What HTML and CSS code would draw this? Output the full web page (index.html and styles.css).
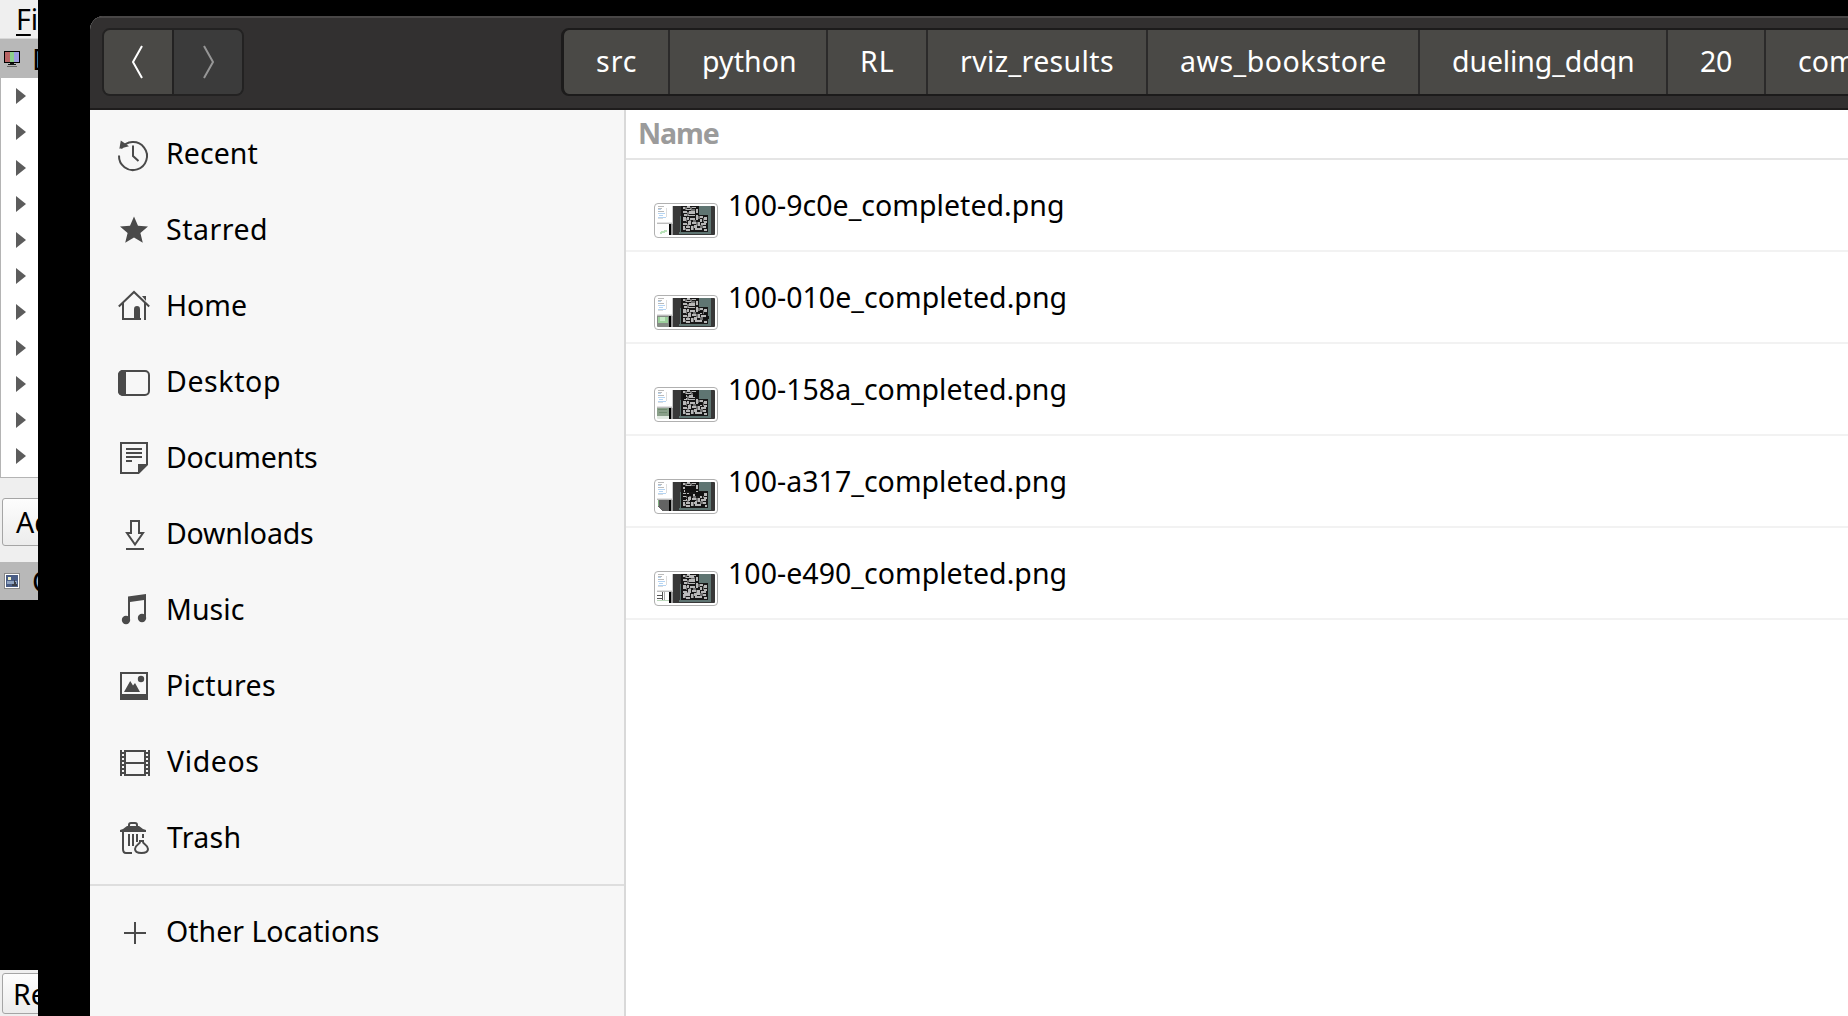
FILE: index.html
```html
<!DOCTYPE html>
<html lang="en">
<head>
<meta charset="utf-8">
<title>Files</title>
<link rel="stylesheet" href="styles.css">
</head>
<body>
<div class="desktop">
  <aside class="rviz">
    <div class="rviz-menu"><u>F</u>ile</div>
    <div class="rviz-title">
      <svg class="mini" viewBox="0 0 16 16" shape-rendering="crispEdges"><path fill="#000" d="M0 0h16v12H0z"/><path fill="#b86464" d="M1 1h5v10H1z"/><path fill="#8ccf8c" d="M6 1h4v10H6z"/><path fill="#9c9ce0" d="M10 1h5v10h-5z"/><path fill="#111" d="M6 12h4v1H6zM4 13h8v1H4z"/><path fill="#666" d="M3 15h10v1H3z"/></svg>
      <span>Displays</span>
    </div>
    <div class="rviz-tree">
      <i></i><i></i><i></i><i></i><i></i><i></i><i></i><i></i><i></i><i></i><i></i>
    </div>
    <div class="rviz-actions"><div class="rviz-button">Add</div></div>
    <div class="rviz-title camera">
      <svg class="mini" viewBox="0 0 16 16" shape-rendering="crispEdges"><path fill="#888" d="M0 0h16v16H0z"/><path fill="#fff" d="M1 1h14v14H1z"/><path fill="#4a5d85" d="M2 2h12v12H2z"/><path fill="#8fa3c0" d="M3 8h10v3H3z"/><path fill="#eef0c8" d="M4 4h3v3H4z"/><path fill="#3b3f48" d="M10 7h1v2h1v2h1v2H8v-2h2z"/></svg>
      <span>Camera</span>
    </div>
    <div class="rviz-view"></div>
    <div class="rviz-footer"><div class="rviz-button">Reset</div></div>
  </aside>

  <main class="window">
    <header class="header">
      <nav class="history">
        <button class="back"><svg width="12" height="34" viewBox="0 0 12 34"><path d="M11 1 2 17l9 16"/></svg></button>
        <button class="forward"><svg width="12" height="34" viewBox="0 0 12 34"><path d="M1 1l9 16L1 33"/></svg></button>
      </nav>
      <nav class="path">
        <a class="c-src">src</a><a class="c-python">python</a><a class="c-rl">RL</a><a class="c-rviz">rviz_results</a><a class="c-aws">aws_bookstore</a><a class="c-ddqn">dueling_ddqn</a><a class="c-20">20</a><a class="c-last">completed</a>
      </nav>
    </header>
    <div class="body">
      <aside class="places">
        <a><svg viewBox="0 0 32 32"><path class="s" d="M3.2 10.5A14 14 0 1 1 1 17.5M15 7.5V18l5.5 5"/><path d="M2.8 2.5 11 8.2l-9.6 2.6z"/></svg><span class="l-1">Recent</span></a>
        <a><svg viewBox="0 0 32 32"><path d="m16 2.5 4 9.2 10 .8-7.6 6.6 2.4 9.7-8.8-5.2-8.8 5.2 2.4-9.7L2 12.500l10-.8z"/></svg><span class="l-5">Starred</span></a>
        <a><svg viewBox="0 0 32 32"><path class="s" d="M.8 16.500 16 2l15.200 14.500M5 13v16h18M27 13v17"/><path d="M16 30V19.500c0-3 1-3.500 3-3.500s3 .5 3 3.500V30zM24 6h4v5z"/></svg><span>Home</span></a>
        <a><svg viewBox="0 0 32 32"><rect class="s" x="1" y="5" width="30" height="24" rx="4"/><path d="M5 4h3v26H5a5 5 0 0 1-5-5V9a5 5 0 0 1 5-5z"/></svg><span class="l-6">Desktop</span></a>
        <a><svg viewBox="0 0 32 32"><path class="s" d="M3 1h26v21.500L20.500 31H3zM8 7h16M8 11h16M8 15h16M8 19h6"/><path d="M20 22h10l-10 10z"/></svg><span class="l-m25">Documents</span></a>
        <a><svg viewBox="0 0 32 32"><path class="s" d="M13 3h8v12h4l-8 11.500L9 15h4zM8 31h18"/></svg><span class="l-m2">Downloads</span></a>
        <a><svg viewBox="0 0 32 32"><path d="M10 2.500 28 0v24h-2V6L12 8v18h-2z"/><circle cx="8" cy="26" r="4.200"/><circle cx="24" cy="24" r="4.200"/></svg><span class="l-1">Music</span></a>
        <a><svg viewBox="0 0 32 32"><path fill-rule="evenodd" d="M2 2h28v28H2zM4 4v20h24V4z"/><path d="M6 22 12.200 11l2.800 4.500 2-2.500 5 9z"/><circle cx="23" cy="9" r="3.200"/></svg><span class="l-4">Pictures</span></a>
        <a><svg viewBox="0 0 32 32"><path d="M2 4h2v26H2zM6 4h2v26H6zM26 4h2v26h-2zM30 4h2v26h-2zM6 4h22v2H6zM6 28h22v2H6zM6 16h22v2H6z"/><path class="s" d="M5 6v24M29 6v24" stroke-dasharray="2"/></svg><span class="l-6 tight">Videos</span></a>
        <a><svg viewBox="0 0 32 32"><path class="s" d="M11 5V3q0-2 2-2h4q2 0 2 2v2M5 9v18q0 4 3 4h6M11 12v12M15 12v12M19 12v8M25 12v4"/><path d="M2 10V8l3-1 4-3h12l4 3 3 1v2z"/><path class="s" d="M21 19h5M22 20c0 2-5 3-5 7 0 3 2 4 6.500 4s6.500-1 6.500-4c0-4-5-5-5-7"/></svg><span class="l-3 tight">Trash</span></a>
        <hr>
        <a><svg viewBox="0 0 32 32"><path class="s" d="M6 17h22M17 6v22"/></svg><span>Other Locations</span></a>
      </aside>

      <section class="files">
        <div class="columns">Name</div>
        <div class="file"><svg class="thumb" viewBox="0 0 58 29" shape-rendering="crispEdges"><use href="#base"/><path fill="#fdfdfd" d="M0 18h12v11H0z"/><path fill="#b9e2b9" d="M4 25h3v-1h3v2H8v1H5v1H3v-2h1z"/><use href="#map"/></svg><span>100-9c0e_completed.png</span></div>
        <div class="file"><svg class="thumb" viewBox="0 0 58 29" shape-rendering="crispEdges"><use href="#base"/><path fill="#858b85" d="M0 18h12v11H0z"/><path fill="#9bcf9b" d="M1 19h10v6H1z"/><path fill="#c5e8c5" d="M3 19h5v4H3z"/><use href="#map"/><path fill="#111" d="M47 15h3v2h-3zM46 20h4v2h-4zM49 18h3v3h-3zM42 13h4v2h-4z"/></svg><span>100-010e_completed.png</span></div>
        <div class="file"><svg class="thumb" viewBox="0 0 58 29" shape-rendering="crispEdges"><use href="#base"/><path fill="#8aa08a" d="M0 18h12v8H0z"/><path fill="#6f8a6f" d="M1 19h9v1H1zM2 22h8v1H2z"/><path fill="#e0e8e0" d="M0 26h12v3H0z"/><use href="#map"/><path fill="#111" d="M36 2h5v5h-5zM26 4h3v5h-3zM42 12h3v3h-3z"/></svg><span>100-158a_completed.png</span></div>
        <div class="file"><svg class="thumb" viewBox="0 0 58 29" shape-rendering="crispEdges"><use href="#base"/><path fill="#fff" d="M0 18h12v11H0z"/><path fill="#636363" d="M1 18h11v11H6l-3-2-2-3z"/><path fill="#7fae7f" d="M1 18h1v6H1z"/><use href="#map"/><path fill="#111" d="M28 4h11v6H28zM26 12h10v2H26zM38 10h9v4h-9zM33 18h5v2h-5zM44 22h4v3h-4zM26 15h3v3h-3z"/></svg><span>100-a317_completed.png</span></div>
        <div class="file"><svg class="thumb" viewBox="0 0 58 29" shape-rendering="crispEdges"><use href="#base"/><path fill="#fff" d="M0 18h12v11H0z"/><path fill="#555" d="M0 21h5v1H0zM5 18h1v8H5zM0 24h5v1H0z"/><path fill="#aaa" d="M7 18h1v8H7z"/><path fill="#b9d5b9" d="M0 26h12v1H0z"/><use href="#map"/><path fill="#bdbdbd" d="M32 1h5v3h-5zM27 19h6v3h-6zM40 16h3v5h-3z"/></svg><span>100-e490_completed.png</span></div>
      </section>
    </div>
  </main>
</div>

<svg class="defs" width="0" height="0">
  <defs>
    <g id="base">
      <path fill="#fff" d="M0 0h15v16H0z"/>
      <path fill="#bbb" d="M1 0h6v1H1zM1 2h4v1H1zM1 5h6v1H1z"/>
      <path fill="#b5d4f2" d="M1 7h7v1H1zM2 9h4v1H2zM1 11h8v1H1zM1 3h3v1H1z"/>
      <path fill="#ddd" d="M1 12h5v1H1zM9 2h1v9H9z"/>
      <path fill="#e3e3e3" d="M0 16h15v1H0z"/>
      <path fill="#bcbcbc" d="M0 17h15v1H0z"/>
      <path fill="#000" d="M12 18h2v11h-2z"/>
      <path fill="#999" d="M14 18h2v11h-2z"/>
      <path fill="#ccc" d="M15 0h1v18h-1z"/>
      <path fill="#383838" d="M16 0h42v29H16z"/>
      <path fill="#5f7572" d="M22 26h32v2H22zM42 0h12v26H42zM23 10h1v16h-1z"/>
    </g>
    <g id="map">
      <path fill="#181818" d="M24 0h18v9h9v17H24z"/>
      <path fill="#707070" d="M28 1h2v3h-2zM33 1h2v2h-2zM34 3h4v2h-4zM30 6h2v4h-2zM29 12h1v4h-1zM32 14h2v2h-2zM36 14h3v2h-3zM30 18h2v2h-2zM39 16h2v4h-2zM43 19h3v3h-3zM36 20h1v4h-1zM28 22h1v2h-1zM41 10h2v3h-2zM46 12h1v4h-1z"/>
      <path fill="#b8b8b8" d="M26 1h2v2h-2zM30 0h3v2h-3zM35 1h4v1h-4zM29 3h5v1h-5zM26 5h4v2h-4zM32 5h6v3h-6zM39 3h2v4h-2zM27 8h3v2h-3zM31 9h7v1h-7zM26 11h3v4h-3zM30 11h2v3h-2zM33 12h5v2h-5zM39 9h2v5h-2zM43 10h3v2h-3zM47 11h3v3h-3zM43 13h2v3h-2zM26 17h4v2h-4zM31 15h3v4h-3zM35 16h4v2h-4zM41 16h2v4h-2zM44 17h5v2h-5zM47 15h3v2h-3zM26 20h2v4h-2zM29 20h4v2h-4zM34 20h2v4h-2zM37 19h3v3h-3zM38 22h7v2h-7zM46 20h3v2h-3zM29 23h4v2h-4zM47 23h3v2h-3z"/>
    </g>
  </defs>
</svg>
</body>
</html>
```
FILE: styles.css
```css
* { box-sizing: border-box; }

body {
  margin: 0;
  background: #000;
  color: #000;
  font-family: "Noto Sans", "Open Sans", sans-serif;
  font-size: 28.5px;
  line-height: 40px;
  white-space: nowrap;
}

.desktop {
  display: flex;
  gap: 52px;
  width: 1848px;
  height: 1016px;
  overflow: hidden;
}

/* Window behind, cut off at its right edge */
.rviz {
  flex: none;
  display: flex;
  flex-direction: column;
  width: 38px;
  overflow: hidden;
  background: #efefef;
}

.rviz-menu {
  height: 39px;
  padding-left: 16px;
  line-height: 38px;
  border-bottom: 1px solid #d8d8d8;
}
.rviz-menu u { text-decoration-thickness: 2px; text-underline-offset: 4px; }

.rviz-title {
  display: flex;
  align-items: center;
  gap: 12px;
  height: 39px;
  padding-left: 4px;
  background: #b8b8b8;
}
.mini { flex: none; width: 16px; height: 16px; }

.rviz-tree {
  display: flex;
  flex-direction: column;
  gap: 20px;
  height: 400px;
  padding: 10px 0 0 15px;
  background: #fff;
  border: solid #b4b4b4;
  border-width: 0 0 1px 1px;
}
.rviz-tree i {
  flex: none;
  width: 10px;
  height: 16px;
  background: #5c5c5c;
  clip-path: polygon(0 0, 100% 50%, 0 100%);
}

.rviz-actions { height: 84px; padding: 20px 0 0 2px; }
.rviz-button {
  width: 80px;
  height: 48px;
  padding-left: 13px;
  line-height: 46px;
  border: 1px solid #a5a5a5;
  border-radius: 3px;
  background: linear-gradient(#fdfdfd, #ececec);
}
.rviz-title.camera { height: 38px; gap: 12px; }
.rviz-view { height: 370px; background: #000; }
.rviz-footer { height: 46px; padding: 3px 0 0 2px; }
.rviz-footer .rviz-button { height: 41px; padding-left: 10px; line-height: 40px; }

/* File manager */
.window {
  flex: none;
  display: flex;
  flex-direction: column;
  width: 1758px;
  height: 1000px;
  margin-top: 16px;
  overflow: hidden;
  border-top-left-radius: 14px;
  background: #fff;
}

.header {
  flex: none;
  display: flex;
  gap: 317px;
  height: 94px;
  padding: 10px 0 0 12px;
  background: #323030;
  border-top: 2px solid #484646;
  border-bottom: 2px solid #1e1c1c;
}

.history {
  flex: none;
  display: flex;
  width: 142px;
  height: 68px;
  border: 2px solid #232222;
  border-radius: 8px;
  overflow: hidden;
}
.history button {
  display: flex;
  align-items: center;
  padding: 0 0 0 27px;
  border: 0;
  background: #4a4946;
  fill: none;
  stroke: #fff;
  stroke-width: 2;
}
.history .back { width: 70px; border-right: 2px solid #232222; }
.history .forward { width: 68px; padding-left: 29px; background: #3b3b3b; stroke: #969696; }

.path {
  flex: none;
  display: flex;
  width: 1400px;
  height: 68px;
  border: 2px solid #1c1b1b;
  border-left-width: 3px;
  border-radius: 8px;
  background: #4a4946;
  color: #fff;
}
.path a {
  flex: none;
  padding-left: 32px;
  line-height: 62px;
  border-right: 2px solid #2b2a2a;
}
.path .c-src { width: 106px; letter-spacing: 1px; }
.path .c-python { width: 158px; letter-spacing: .07px; }
.path .c-rl { width: 100px; letter-spacing: 1px; }
.path .c-rviz { width: 220px; letter-spacing: .38px; }
.path .c-aws { width: 272px; letter-spacing: .5px; }
.path .c-ddqn { width: 248px; letter-spacing: -.12px; }
.path .c-20 { width: 98px; letter-spacing: -.3px; }
.path .c-last { width: 220px; }

.body { flex: 1; display: flex; }

.places {
  flex: none;
  width: 536px;
  padding-top: 5px;
  background: #f7f7f7;
  border-right: 2px solid #d9d9d9;
}
.places a {
  display: flex;
  align-items: center;
  gap: 16px;
  height: 76px;
  padding-left: 28px;
}
.places svg {
  flex: none;
  width: 32px;
  height: 32px;
  margin-top: 2px;
  fill: #4a4a4a;
  overflow: visible;
}
.places .s { fill: none; stroke: #4a4a4a; stroke-width: 2; }
.places hr {
  height: 2px;
  margin: 9px 0 7px;
  border: 0;
  background: #dedede;
}

.l-1 { letter-spacing: .07px; }
.l-3 { letter-spacing: .31px; }
.l-4 { letter-spacing: .36px; }
.l-5 { letter-spacing: .51px; }
.l-6 { letter-spacing: .6px; }
.l-m2 { letter-spacing: -.2px; }
.l-m25 { letter-spacing: -.25px; }
.tight { padding-left: 1px; }

.files { flex: 1; }
.columns {
  height: 50px;
  padding-left: 12px;
  line-height: 46px;
  font-weight: bold;
  color: #9b9b9b;
  letter-spacing: -1.1px;
  border-bottom: 2px solid #e5e5e5;
}
.file {
  display: flex;
  gap: 10px;
  height: 92px;
  padding: 25px 0 0 28px;
  border-bottom: 2px solid #f2f2f2;
  letter-spacing: .03px;
}
.thumb {
  flex: none;
  width: 64px;
  height: 35px;
  margin-top: 18px;
  padding: 2px;
  border: 1px solid #b0b0b0;
  border-radius: 4px;
  background: #fff;
}
.defs { display: none; }
```
